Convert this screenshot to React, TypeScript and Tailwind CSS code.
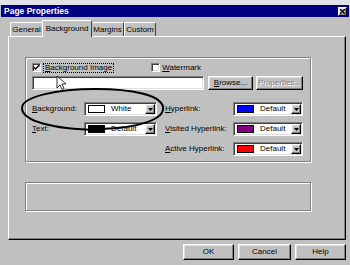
import React from "react";

const raised =
  "bg-[#c0c0c0] border border-t-white border-l-white border-r-black border-b-black shadow-[inset_-1px_-1px_0_#808080,inset_1px_1px_0_#dfdfdf]";
const sunken =
  "bg-white border border-t-[#808080] border-l-[#808080] border-r-white border-b-white shadow-[inset_1px_1px_0_#404040,inset_-1px_-1px_0_#dfdfdf]";

function Btn({ children, w, disabled }: { children: React.ReactNode; w: string; disabled?: boolean }) {
  return (
    <div className={`${raised} ${w} h-[14px] flex items-center justify-center leading-none`}>
      <span className={disabled ? "text-[#808080] [text-shadow:1px_1px_0_#fff]" : ""}>{children}</span>
    </div>
  );
}

function Check({ checked }: { checked?: boolean }) {
  return (
    <div className={`${sunken} w-[9px] h-[9px] flex items-center justify-center`}>
      {checked && (
        <svg width="7" height="7" viewBox="0 0 7 7">
          <path d="M0.5 3 L2.5 5 L6.5 1" stroke="#000" strokeWidth="1.5" fill="none" />
        </svg>
      )}
    </div>
  );
}

function Combo({ w, color, label }: { w: string; color: string; label: string }) {
  return (
    <div className={`${sunken} ${w} h-[14px] flex items-center pl-[3px] pr-[1px]`}>
      <div className="w-[17px] h-[8px] border border-black" style={{ background: color }} />
      <span className="ml-[6px] flex-1 leading-none">{label}</span>
      <div className={`${raised} w-[10px] h-[10px] flex items-center justify-center`}>
        <svg width="5" height="3" viewBox="0 0 5 3">
          <path d="M0 0 H5 L2.5 3 Z" fill="#000" />
        </svg>
      </div>
    </div>
  );
}

function Label({ first, rest, w }: { first: string; rest: string; w: string }) {
  return (
    <div className={`${w} leading-none`}>
      <u>{first}</u>
      {rest}
    </div>
  );
}

export default function App() {
  return (
    <div className="relative w-[350px] h-[265px] bg-[#c0c0c0] overflow-hidden text-[8px] text-black font-['Liberation_Sans',Arial,sans-serif]">
      <div className="h-[5px] bg-[#e2e2e6]" />
      {/* Title bar */}
      <div className="h-[12px] mx-[1px] bg-[#000080] flex items-center justify-between pl-[3px] pr-[2px]">
        <span className="text-white font-bold text-[8.5px] leading-none">Page Properties</span>
        <div className={`${raised} w-[9px] h-[9px] flex items-center justify-center`}>
          <svg width="5" height="5" viewBox="0 0 5 5">
            <path d="M0 0 L5 5 M5 0 L0 5" stroke="#000" strokeWidth="1.3" />
          </svg>
        </div>
      </div>

      {/* Tabs */}
      <div className="mt-[3px] h-[16px] pl-[8px] flex items-end relative z-10">
        <div className="ml-[2px] w-[33px] h-[14px] border-l border-t border-white border-r border-r-[#404040] rounded-t-[2px] flex items-center justify-center leading-none pt-[1px]">
          General
        </div>
        <div className="relative top-[1px] -ml-[1px] w-[50px] h-[17px] bg-[#c0c0c0] border-l border-t border-white border-r border-r-[#404040] rounded-t-[2px] flex items-start justify-center leading-none pt-[4px]">
          Background
        </div>
        <div className="w-[32px] h-[14px] border-t border-white border-r border-r-[#404040] rounded-t-[2px] flex items-center justify-center leading-none pt-[1px]">
          Margins
        </div>
        <div className="w-[32px] h-[14px] border-l border-t border-white border-r border-r-[#404040] rounded-t-[2px] flex items-center justify-center leading-none pt-[1px]">
          Custom
        </div>
      </div>

      {/* Panel */}
      <div className="ml-[8px] w-[338px] h-[204px] border-l border-t border-white border-r border-b border-r-black border-b-black shadow-[inset_-1px_-1px_0_#808080] pl-[16px] pt-[20px]">
        {/* Group box */}
        <div className="w-[286px] h-[105px] border border-[#808080] shadow-[inset_1px_1px_0_#fff,1px_1px_0_#fff] pl-[6px] pt-[5px] flex flex-col">
          <div className="flex items-center h-[9px]">
            <Check checked />
            <div className="ml-[2px] px-[1px] border border-dotted border-black leading-none">
              <u>B</u>ackground Image
            </div>
            <div className="ml-[37px]">
              <Check />
            </div>
            <div className="ml-[2px] leading-none">
              <u>W</u>atermark
            </div>
          </div>
          <div className="mt-[4px] flex items-center h-[14px]">
            <div className={`${sunken} w-[172px] h-[14px]`} />
            <div className="ml-[4px]">
              <Btn w="w-[45px]">
                <u>B</u>rowse...
              </Btn>
            </div>
            <div className="ml-[3px]">
              <Btn w="w-[47px]" disabled>
                Properties...
              </Btn>
            </div>
          </div>
          <div className="mt-[12px] flex flex-col gap-[6px]">
            <div className="flex items-center h-[14px]">
              <Label first="B" rest="ackground:" w="w-[52px]" />
              <Combo w="w-[73px]" color="#ffffff" label="White" />
              <Label first="H" rest="yperlink:" w="ml-[8px] w-[68px]" />
              <Combo w="w-[70px]" color="#0000ff" label="Default" />
            </div>
            <div className="flex items-center h-[14px]">
              <Label first="T" rest="ext:" w="w-[52px]" />
              <Combo w="w-[73px]" color="#000000" label="Default" />
              <Label first="V" rest="isited Hyperlink:" w="ml-[8px] w-[68px]" />
              <Combo w="w-[70px]" color="#800080" label="Default" />
            </div>
            <div className="flex items-center h-[14px]">
              <div className="w-[52px]" />
              <div className="w-[73px]" />
              <Label first="A" rest="ctive Hyperlink:" w="ml-[8px] w-[68px]" />
              <Combo w="w-[70px]" color="#ff0000" label="Default" />
            </div>
          </div>
        </div>
        {/* Second box */}
        <div className="mt-[20px] w-[286px] h-[29px] border border-[#808080] shadow-[inset_1px_1px_0_#fff,1px_1px_0_#fff]" />
      </div>

      {/* Bottom buttons */}
      <div className="mt-[4px] flex justify-end gap-[4px] pr-[4px]">
        <div className={`${raised} w-[51px] h-[16px] flex items-center justify-center leading-none`}>OK</div>
        <div className={`${raised} w-[53px] h-[16px] flex items-center justify-center leading-none`}>Cancel</div>
        <div className={`${raised} w-[51px] h-[16px] flex items-center justify-center leading-none`}>Help</div>
      </div>

      {/* Hand-drawn ellipse + cursor overlay */}
      <svg className="absolute left-0 top-0 pointer-events-none" width="350" height="265" viewBox="0 0 350 265">
        <path
          d="M100 129 C 140 128, 165 119, 163 107 C 161 95, 132 89, 96 89 C 56 89, 22 97, 22 108 C 22 121, 52 129, 98 130"
          stroke="#000"
          strokeWidth="2"
          fill="none"
          strokeLinecap="round"
        />
        <path
          d="M57 76 L57 88 L60 85 L62 89.5 L64 88.5 L62 84 L66 84 Z"
          fill="#fff"
          stroke="#000"
          strokeWidth="0.8"
        />
      </svg>
    </div>
  );
}
